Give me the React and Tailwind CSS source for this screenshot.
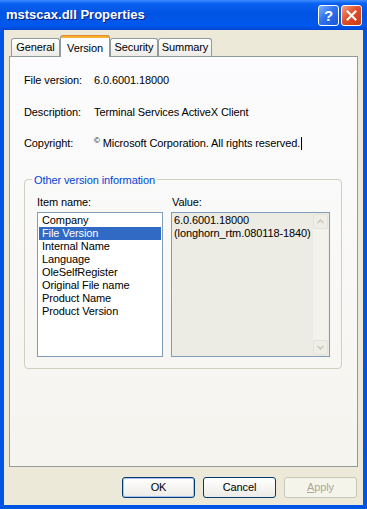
import React from "react";

const items = [
  "Company",
  "File Version",
  "Internal Name",
  "Language",
  "OleSelfRegister",
  "Original File name",
  "Product Name",
  "Product Version",
];

function TitleButton({ kind }) {
  const isClose = kind === "close";
  return (
    <div
      className={
        "flex h-[21px] w-[21px] items-center justify-center rounded-[3px] border border-white " +
        (isClose
          ? "bg-[linear-gradient(135deg,#F0A088_0%,#E0502A_45%,#C83A14_100%)]"
          : "bg-[linear-gradient(135deg,#7DB2FF_0%,#2F73F0_45%,#1C55D8_100%)]")
      }
    >
      {isClose ? (
        <svg width="11" height="11" viewBox="0 0 11 11">
          <path d="M1.5 1.5 L9.5 9.5 M9.5 1.5 L1.5 9.5" stroke="#fff" strokeWidth="2" strokeLinecap="square" />
        </svg>
      ) : (
        <span className="text-[15px] font-bold leading-none text-white">?</span>
      )}
    </div>
  );
}

function Tab({ label, active, w }) {
  if (active) {
    return (
      <div
        className={`relative z-10 -mb-px flex h-[22px] items-center justify-center rounded-t-[3px] border border-b-0 border-[#919B9C] bg-[#FCFCFE] pt-[1px] ${w}`}
      >
        <div className="absolute left-0 right-0 top-[-1px] h-[3px] rounded-t-[3px] bg-[#F8B030] border-t border-[#E68B2C]" />
        <span className="mt-[2px]">{label}</span>
      </div>
    );
  }
  return (
    <div
      className={`flex h-[18px] items-center justify-center rounded-t-[3px] border border-b-0 border-[#919B9C] bg-[linear-gradient(to_bottom,#FFFFFF,#ECEBE6)] ${w}`}
    >
      {label}
    </div>
  );
}

export default function App() {
  return (
    <div
      className="flex h-[509px] w-[367px] flex-col overflow-hidden bg-[#0054E3] text-[11px] tracking-[-0.1px] text-black"
      style={{ fontFamily: '"Liberation Sans", Arial, sans-serif' }}
    >
      {/* title bar */}
      <div className="flex h-[30px] shrink-0 items-center justify-between bg-[linear-gradient(to_bottom,#3D8DFF_0%,#0A60F0_12%,#0054E3_45%,#0058EE_85%,#0047D4_100%)] pl-[6px] pr-[5px]">
        <span className="text-[13px] font-bold tracking-normal text-white [text-shadow:1px_1px_0_#0A1E80]">
          mstscax.dll Properties
        </span>
        <div className="flex gap-[2px]">
          <TitleButton kind="help" />
          <TitleButton kind="close" />
        </div>
      </div>

      {/* client area */}
      <div className="mx-[4px] mb-[4px] flex flex-1 flex-col bg-[#ECE9D8] px-[5px] pt-[5px]">
        {/* tabs */}
        <div className="flex items-end pl-[2px]">
          <Tab label="General" w="w-[49px]" />
          <Tab label="Version" active w="w-[50px]" />
          <Tab label="Security" w="w-[48px]" />
          <Tab label="Summary" w="w-[54px]" />
        </div>

        {/* tab page */}
        <div className="h-[411px] border border-[#919B9C] bg-[linear-gradient(to_bottom,#FCFCFE_0%,#F5F4EF_100%)] px-[14px] pt-[17px]">
          <div className="flex h-[13px] items-center">
            <span className="w-[70px]">File version:</span>
            <span>6.0.6001.18000</span>
          </div>
          <div className="mt-[19px] flex h-[13px] items-center">
            <span className="w-[70px]">Description:</span>
            <span>Terminal Services ActiveX Client</span>
          </div>
          <div className="mt-[18px] flex h-[13px] items-center">
            <span className="w-[70px]">Copyright:</span>
            <span>
              <span className="text-[8px] align-top">©</span> Microsoft Corporation. All rights reserved.
            </span>
            <span className="ml-[1px] h-[13px] w-px bg-black" />
          </div>

          {/* group box */}
          <div className="relative mt-[29px] h-[190px] w-[318px] rounded-[4px] border border-[#D0D0BF] px-[12px] pt-[15px]">
            <span className="absolute left-[7px] top-[-8px] bg-[#F9F9F8] px-[2px] text-[#0046D5]">
              Other version information
            </span>
            <div className="flex gap-[8px]">
              <div className="flex flex-col">
                <span className="h-[14px] leading-[14px]">Item name:</span>
                <div className="mt-[3px] h-[145px] w-[126px] border border-[#7F9DB9] bg-white p-px leading-[13px]">
                  {items.map((it) => (
                    <div
                      key={it}
                      className={
                        "h-[13px] pl-[3px] " +
                        (it === "File Version" ? "bg-[#316AC5] text-white" : "")
                      }
                    >
                      {it}
                    </div>
                  ))}
                </div>
              </div>
              <div className="flex flex-col">
                <span className="h-[14px] pl-px leading-[14px]">Value:</span>
                <div className="mt-[3px] flex h-[145px] w-[159px] border border-[#7F9DB9] bg-[#ECEBE4]">
                  <div className="flex-1 overflow-hidden whitespace-nowrap pl-[2px] pt-px leading-[13px]">
                    <div>6.0.6001.18000</div>
                    <div>(longhorn_rtm.080118-1840)</div>
                  </div>
                  <div className="my-px mr-px flex w-[15px] shrink-0 flex-col justify-between bg-[#F3F2EC]">
                    <div className="flex h-[15px] items-center justify-center rounded-[2px] border border-[#E4E2D8] bg-[#EEEDE6]">
                      <svg width="7" height="5" viewBox="0 0 7 5">
                        <path d="M0.5 4 L3.5 1 L6.5 4" fill="none" stroke="#C9C7BA" strokeWidth="1.5" />
                      </svg>
                    </div>
                    <div className="flex h-[15px] items-center justify-center rounded-[2px] border border-[#E4E2D8] bg-[#EEEDE6]">
                      <svg width="7" height="5" viewBox="0 0 7 5">
                        <path d="M0.5 1 L3.5 4 L6.5 1" fill="none" stroke="#C9C7BA" strokeWidth="1.5" />
                      </svg>
                    </div>
                  </div>
                </div>
              </div>
            </div>
          </div>
        </div>

        {/* buttons */}
        <div className="mt-[10px] flex justify-end gap-[8px] pr-[1px]">
          <button className="h-[21px] w-[73px] rounded-[3px] border border-[#003C74] bg-[linear-gradient(to_bottom,#FFFFFF,#ECEBE6)] shadow-[inset_0_0_0_1px_#A8C4F0]">
            OK
          </button>
          <button className="h-[21px] w-[73px] rounded-[3px] border border-[#003C74] bg-[linear-gradient(to_bottom,#FFFFFF,#ECEBE6)]">
            Cancel
          </button>
          <button className="h-[21px] w-[73px] rounded-[3px] border border-[#C9C7BA] bg-[#F5F4EA] text-[#ACA899]">
            <span className="underline">A</span>pply
          </button>
        </div>
      </div>
    </div>
  );
}
